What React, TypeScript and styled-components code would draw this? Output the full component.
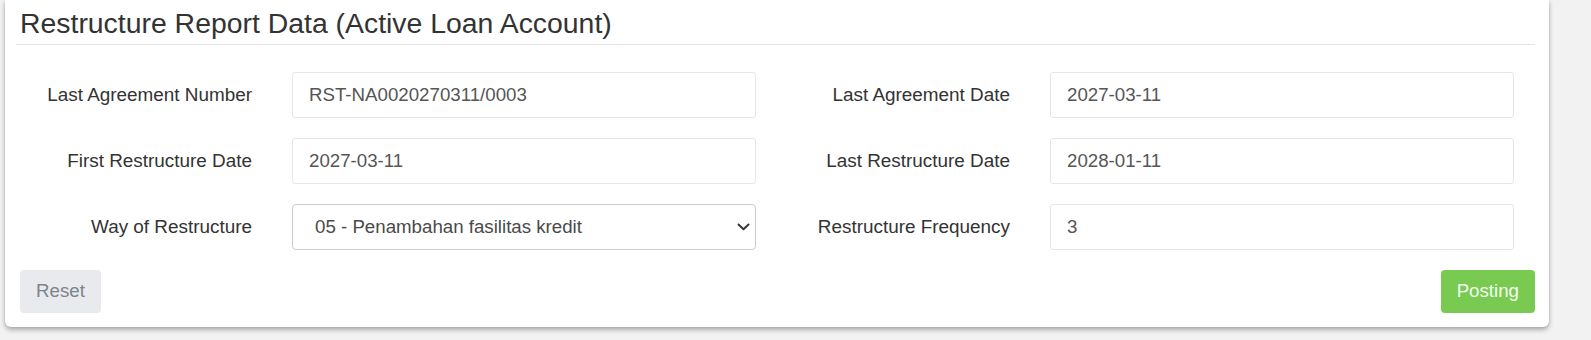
import styled, { createGlobalStyle } from "styled-components"

const GlobalStyle = createGlobalStyle`
  html, body {
    margin: 0;
    padding: 0;
    background: #f2f2f2;
    font-family: "Liberation Sans", Arial, sans-serif;
    overflow: hidden;
  }
`

type FieldDef = { label: string; value: string; select?: boolean }

const leftFields: FieldDef[] = [
  { label: "Last Agreement Number", value: "RST-NA0020270311/0003" },
  { label: "First Restructure Date", value: "2027-03-11" },
  { label: "Way of Restructure", value: "05 - Penambahan fasilitas kredit", select: true },
]

const rightFields: FieldDef[] = [
  { label: "Last Agreement Date", value: "2027-03-11" },
  { label: "Last Restructure Date", value: "2028-01-11" },
  { label: "Restructure Frequency", value: "3" },
]

const Field: React.FC<{ field: FieldDef }> = ({ field }) => (
  <FieldRow>
    <Label>{field.label}</Label>
    {field.select ? (
      <SelectWrap>
        <Select defaultValue={field.value}>
          <option value={field.value}>{field.value}</option>
        </Select>
        <Chevron width="13" height="8" viewBox="0 0 13 8">
          <path d="M1.5 1.5 L6.5 6.2 L11.5 1.5" fill="none" stroke="#333" strokeWidth="1.9" strokeLinecap="round" strokeLinejoin="round" />
        </Chevron>
      </SelectWrap>
    ) : (
      <Input readOnly value={field.value} />
    )}
  </FieldRow>
)

const App: React.FC = () => {
  return (
    <Page>
      <GlobalStyle />
      <Card>
        <Header>
          <Title>Restructure Report Data (Active Loan Account)</Title>
        </Header>
        <FormGrid>
          <Column>
            {leftFields.map((f) => (
              <Field key={f.label} field={f} />
            ))}
          </Column>
          <Column>
            {rightFields.map((f) => (
              <Field key={f.label} field={f} />
            ))}
          </Column>
        </FormGrid>
        <Footer>
          <Button variant="reset">Reset</Button>
          <Button variant="posting">Posting</Button>
        </Footer>
      </Card>
    </Page>
  )
}

const Page = styled.div`
  width: 1591px;
  height: 340px;
  padding-left: 5px;
  box-sizing: border-box;
`

const Card = styled.div`
  width: 1544px;
  box-sizing: border-box;
  background: #fff;
  border-radius: 0 0 6px 6px;
  padding: 0 14px 14px 11px;
  box-shadow: 0 3px 5px rgba(0, 0, 0, 0.28), 0 0 3px rgba(0, 0, 0, 0.12);
`

const Header = styled.div`
  padding: 8px 0 5px 4px;
  border-bottom: 1px solid #e3e3e3;
`

const Title = styled.h3`
  margin: 0;
  font-size: 28.4px;
  line-height: 30.8px;
  font-weight: normal;
  color: #333;
`

const FormGrid = styled.div`
  display: grid;
  grid-template-columns: 740px 740px;
  column-gap: 18px;
  margin-top: 27px;
`

const Column = styled.div`
  display: flex;
  flex-direction: column;
  gap: 20px;
`

const FieldRow = styled.div`
  display: grid;
  grid-template-columns: 236px 464px;
  column-gap: 40px;
  align-items: center;
`

const Label = styled.label`
  text-align: right;
  font-size: 18.9px;
  color: #333;
`

const Input = styled.input`
  height: 46px;
  box-sizing: border-box;
  width: 100%;
  border: 1px solid #e6e6e6;
  border-radius: 3px;
  padding: 0 16px;
  font-family: "Liberation Sans", Arial, sans-serif;
  font-size: 18.7px;
  color: #555;
  background: #fff;
  outline: none;
`

const SelectWrap = styled.div`
  position: relative;
  height: 46px;
`

const Select = styled.select`
  appearance: none;
  width: 100%;
  height: 46px;
  box-sizing: border-box;
  border: 1px solid #cccccc;
  border-radius: 4px;
  padding: 0 30px 0 22px;
  font-family: "Liberation Sans", Arial, sans-serif;
  font-size: 18.7px;
  color: #4a4a4a;
  background: #fff;
  outline: none;
`

const Chevron = styled.svg`
  position: absolute;
  right: 6px;
  top: 19px;
  pointer-events: none;
`

const Footer = styled.div`
  display: flex;
  justify-content: space-between;
  margin-top: 20px;
  padding-left: 4px;
`

const Button = styled.button<{ variant: "reset" | "posting" }>`
  height: 43px;
  padding: 0 16px;
  border: none;
  border-radius: 4px;
  font-family: "Liberation Sans", Arial, sans-serif;
  font-size: 18.7px;
  background: ${(p) => (p.variant === "posting" ? "#78ca50" : "#e8eaed")};
  color: ${(p) => (p.variant === "posting" ? "#f4fff0" : "#7d848b")};
`

export default App
